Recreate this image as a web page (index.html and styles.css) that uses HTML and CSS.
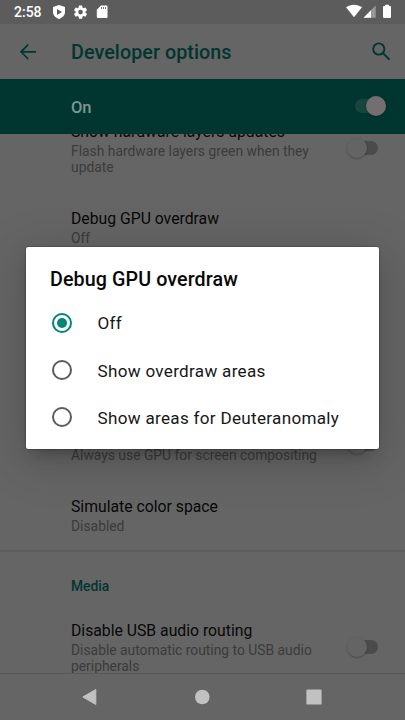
FILE: index.html
```
<!DOCTYPE html>
<html lang="en">
<head>
<meta charset="utf-8">
<title>Developer options</title>
<link rel="stylesheet" href="styles.css">
</head>
<body>
<div class="screen">
  <header class="status">
    <span class="clock">2:58</span>
    <svg class="status-left" width="58" height="24" viewBox="0 0 58 24">
      <path fill="#fff" fill-rule="evenodd" d="M6 5l6 2v5c0 3.400-2.400 5.600-6 7-3.600-1.400-6-3.600-6-7V7zM4 9v6l5-3z"/>
      <g transform="translate(19.600 4.200) scale(.66)"><path fill="#fff" d="M19.430 12.980c.04-.32.070-.64.070-.98s-.03-.66-.07-.98l2.110-1.650c.19-.15.240-.42.120-.64l-2-3.460c-.12-.22-.39-.3-.61-.22l-2.490 1c-.52-.4-1.080-.73-1.690-.98l-.38-2.650A.488.488 0 0 0 14 2h-4c-.25 0-.46.180-.49.420l-.38 2.650c-.61.250-1.170.590-1.690.980l-2.490-1c-.23-.09-.49 0-.61.220l-2 3.460c-.13.220-.07.490.12.640l2.110 1.650c-.04.320-.07.650-.07.980s.030.660.070.980l-2.110 1.650c-.19.150-.24.420-.12.640l2 3.460c.12.220.39.300.61.220l2.490-1c.52.400 1.080.730 1.690.980l.38 2.650c.03.240.24.420.49.420h4c.25 0 .46-.18.490-.42l.38-2.650c.61-.25 1.170-.59 1.690-.98l2.490 1c.23.090.49 0 .61-.22l2-3.460c.12-.22.070-.49-.12-.64zM12 15.500a3.500 3.500 0 1 1 0-7 3.500 3.500 0 0 1 0 7z"/></g>
      <path fill="#fff" d="M48 5.500h5.500a1 1 0 0 1 1 1V17a1 1 0 0 1-1 1h-8.700a1 1 0 0 1-1-1V9.700z"/>
      <path stroke="#777" d="M48.500 7v2M50.500 7v2M52.500 7v2"/>
    </svg>
    <svg class="status-right" width="46" height="24" viewBox="0 0 46 24">
      <path fill="#fff" d="M1 7.300C5.700 3.900 12.300 3.900 17 7.300L9 17.300z"/>
      <path fill="#999" d="M30.700 5.500v12.300H18.500z"/><path fill="#fff" d="M26 10.300v7.500h-7.500z"/>
      <path fill="#fff" d="M40 4.800h4v1.300h1.200a.8.800 0 0 1 .8.800v10.200a.8.800 0 0 1-.8.800h-6.400a.8.800 0 0 1-.8-.8V6.900a.8.800 0 0 1 .8-.8H40z"/>
    </svg>
  </header>
  <div class="appbar">
    <svg class="back" width="18" height="18" viewBox="0 0 18 18"><path fill="none" stroke="#00362f" stroke-width="1.700" d="M17 8.800H2M9.200 1.600L2 8.800 9.200 16"/></svg>
    <h1>Developer options</h1>
    <svg class="search" width="20" height="20" viewBox="0 0 20 20"><g fill="none" stroke="#00362f" stroke-width="1.900"><circle cx="7.800" cy="7" r="5.600"/><path d="M11.800 11l6.700 6.700"/></g></svg>
  </div>
  <div class="master"><span>On</span><i class="switch on"></i></div>
  <main class="list">
    <section class="item first"><div class="text"><h2>Show hardware layers updates</h2><p>Flash hardware layers green when they<br>update</p></div><i class="switch"></i></section>
    <section class="item"><div class="text"><h2>Debug GPU overdraw</h2><p>Off</p></div></section>
    <div class="covered"></div>
    <section class="item"><div class="text"><h2>Disable HW overlays</h2><p>Always use GPU for screen compositing</p></div><i class="switch"></i></section>
    <section class="item"><div class="text"><h2>Simulate color space</h2><p>Disabled</p></div></section>
    <h3>Media</h3>
    <section class="item"><div class="text"><h2>Disable USB audio routing</h2><p>Disable automatic routing to USB audio<br>peripherals</p></div><i class="switch"></i></section>
  </main>
  <nav class="nav">
    <svg width="16" height="18" viewBox="0 0 16 18"><path fill="#c1c1c1" stroke="#c1c1c1" stroke-linejoin="round" d="M13.800 1.500v15L.8 9z"/></svg>
    <svg width="16" height="16" viewBox="0 0 16 16"><circle cx="8.300" cy="8" r="7.300" fill="#c1c1c1"/></svg>
    <svg width="16" height="16" viewBox="0 0 16 16"><rect x=".4" y=".4" width="15.200" height="15.200" rx="1.200" fill="#c1c1c1"/></svg>
  </nav>
  <div class="dialog">
    <h4>Debug GPU overdraw</h4>
    <div class="option"><i class="radio checked"></i><span>Off</span></div>
    <div class="option"><i class="radio"></i><span>Show overdraw areas</span></div>
    <div class="option"><i class="radio"></i><span>Show areas for Deuteranomaly</span></div>
  </div>
</div>
</body>
</html>
```
FILE: styles.css
```
* { box-sizing: border-box; }
body { margin: 0; font-family: Roboto, sans-serif; }
h1, h2, h3, h4, p { margin: 0; font-weight: 400; white-space: nowrap; }
svg { display: block; flex: none; }
.screen { position: relative; width: 405px; height: 720px; display: flex; flex-direction: column; background: #656565; overflow: hidden; }
.status { height: 24px; flex: none; display: flex; align-items: center; padding: 0 14px; background: #5c5c5c; }
.clock { width: 39px; color: #fff; font-size: 14px; font-weight: 500; line-height: 22px; }
.status-right { margin-left: auto; }
.appbar { height: 55px; flex: none; display: flex; align-items: center; padding: 0 14px 0 19px; }
.appbar h1 { margin-left: 34px; color: #00362f; font-size: 19.700px; font-weight: 500; line-height: 24px; padding-top: 2px; letter-spacing: .08px; }
.search { margin-left: auto; }
.master { height: 54.500px; flex: none; display: flex; align-items: center; justify-content: space-between; padding: 0 19px 0 71px; background: #00362f; color: #7d9692; font-size: 16.500px; font-weight: 500; }
.master span { padding-top: 2px; }
.list { flex: 1; min-height: 0; overflow: hidden; border-bottom: 1px solid #595959; }
.item { display: flex; align-items: center; justify-content: space-between; padding: 16px 26px 16px 71px; }
.first { margin-top: -29.500px; }
.item h2 { padding: 1px 0; color: #080808; font-size: 15.750px; line-height: 21px; }
.item p { color: #3b3b3b; font-size: 13.850px; line-height: 16px; }
.covered { height: 146px; }
.list h3 { height: 53px; padding: 17px 0 0 71px; border-top: 2px solid #5d5d5d; color: #00362f; font-size: 13.800px; font-weight: 500; line-height: 34px; }
.switch { position: relative; display: block; flex: none; width: 31px; height: 20px; }
.switch::before { content: ""; position: absolute; left: 4px; top: 3px; width: 26px; height: 14px; border-radius: 7px; background: #4b4b4b; }
.switch::after { content: ""; position: absolute; left: -1px; top: 0; width: 20px; height: 20px; border-radius: 50%; background: #646464; box-shadow: 0 1px 2px #0004; }
.switch.on::before { left: 0; background: #17463f; }
.switch.on::after { left: 11px; background: #736f70; }
.nav { height: 46px; flex: none; display: flex; align-items: center; justify-content: space-between; padding: 0 83px 1px 82px; }
.dialog { position: absolute; left: 26px; top: 247px; width: 353px; height: 202px; padding: 20px 24px 0; background: #fff; border-radius: 2px; box-shadow: 0 11px 15px -7px #0004, 0 9px 46px 8px #0002, 0 0 2px #0008; }
.dialog h4 { height: 32px; padding-top: 1px; color: #080808; font-size: 19.700px; font-weight: 500; line-height: 24px; letter-spacing: .1px; }
.option { height: 47.400px; display: flex; align-items: center; color: #171717; font-size: 17.100px; letter-spacing: .3px; }
.option span { margin-left: 25.500px; padding-top: 1px; white-space: nowrap; }
.radio { display: grid; place-items: center; width: 20px; height: 20px; margin-left: 2px; border: 2px solid #5c5c5c; border-radius: 50%; }
.radio.checked { border-color: #008577; }
.checked::after { content: ""; width: 10px; height: 10px; border-radius: 50%; background: #008577; }
```
